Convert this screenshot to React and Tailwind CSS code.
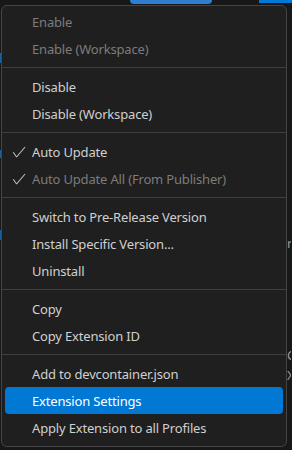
import React from "react";

const Check = ({ className }) => (
  <svg width="16" height="16" viewBox="0 0 16 16" fill="currentColor" className={className}>
    <path d="M14.431 3.323l-8.47 10-.79-.036-3.35-4.77.818-.574 2.978 4.24 8.051-9.506.764.646z" />
  </svg>
);

function Item({ label, disabled, checked, active }) {
  const color = active ? "bg-[#0078d4] text-white" : disabled ? "text-[#7c7c7c]" : "text-[#d0d0d0]";
  return (
    <div className={`mx-[3px] h-[27px] flex items-center rounded-[4px] ${color}`}>
      <div className="w-[27px] h-full flex items-center pl-[6px]">
        {checked && <Check className="text-[#c8c8c8]" />}
      </div>
      <span className="whitespace-nowrap leading-none pt-[1px] tracking-[-0.17px]">{label}</span>
    </div>
  );
}

function Sep() {
  return (
    <div className="h-[11px] pt-[5px]">
      <div className="h-px bg-[#3e3e3e]" />
    </div>
  );
}

export default function App() {
  return (
    <div
      className="w-[292px] h-[450px] bg-[#181818] overflow-hidden flex flex-col"
      style={{ fontFamily: '"Noto Sans", "Open Sans", sans-serif' }}
    >
      <div className="h-[5px] flex shrink-0">
        <div className="w-[130px]" />
        <div className="w-[82px] h-[4px] bg-[#2f7fd0] rounded-b-[6px]" />
        <div className="w-[47px]" />
        <div className="flex-1 h-[3px] bg-[#0078d4]" />
      </div>
      <div className="flex flex-1">
        <div className="w-[1px] flex flex-col">
          <div className="h-[48px]" />
          <div className="h-[10px] bg-[#1f5f9f]" />
          <div className="h-[87px]" />
          <div className="h-[8px] bg-[#1f5f9f]" />
          <div className="h-[72px]" />
          <div className="h-[10px] bg-[#1f5f9f]" />
        </div>
        <div className="w-[286px] h-[442px] bg-[#1f1f1f] border border-[#454545] rounded-[6px] pt-[2px] pb-[4px] text-[13px] shrink-0">
          <Item label="Enable" disabled />
          <Item label="Enable (Workspace)" disabled />
          <Sep />
          <Item label="Disable" />
          <Item label="Disable (Workspace)" />
          <Sep />
          <Item label="Auto Update" checked />
          <Item label="Auto Update All (From Publisher)" checked disabled />
          <Sep />
          <Item label="Switch to Pre-Release Version" />
          <Item label="Install Specific Version..." />
          <Item label="Uninstall" />
          <Sep />
          <Item label="Copy" />
          <Item label="Copy Extension ID" />
          <Sep />
          <Item label="Add to devcontainer.json" />
          <Item label="Extension Settings" active />
          <Item label="Apply Extension to all Profiles" />
        </div>
        <div className="flex-1 overflow-hidden flex flex-col text-[13px] text-[#9a9a9a] leading-none">
          <div className="h-[232px]" />
          <div className="h-[14px] w-[4px] overflow-hidden">r</div>
          <div className="h-[98px]" />
          <div className="h-[20px] w-[4px] overflow-hidden">C</div>
          <div className="h-[16px] w-[4px] overflow-hidden">X</div>
        </div>
      </div>
    </div>
  );
}
